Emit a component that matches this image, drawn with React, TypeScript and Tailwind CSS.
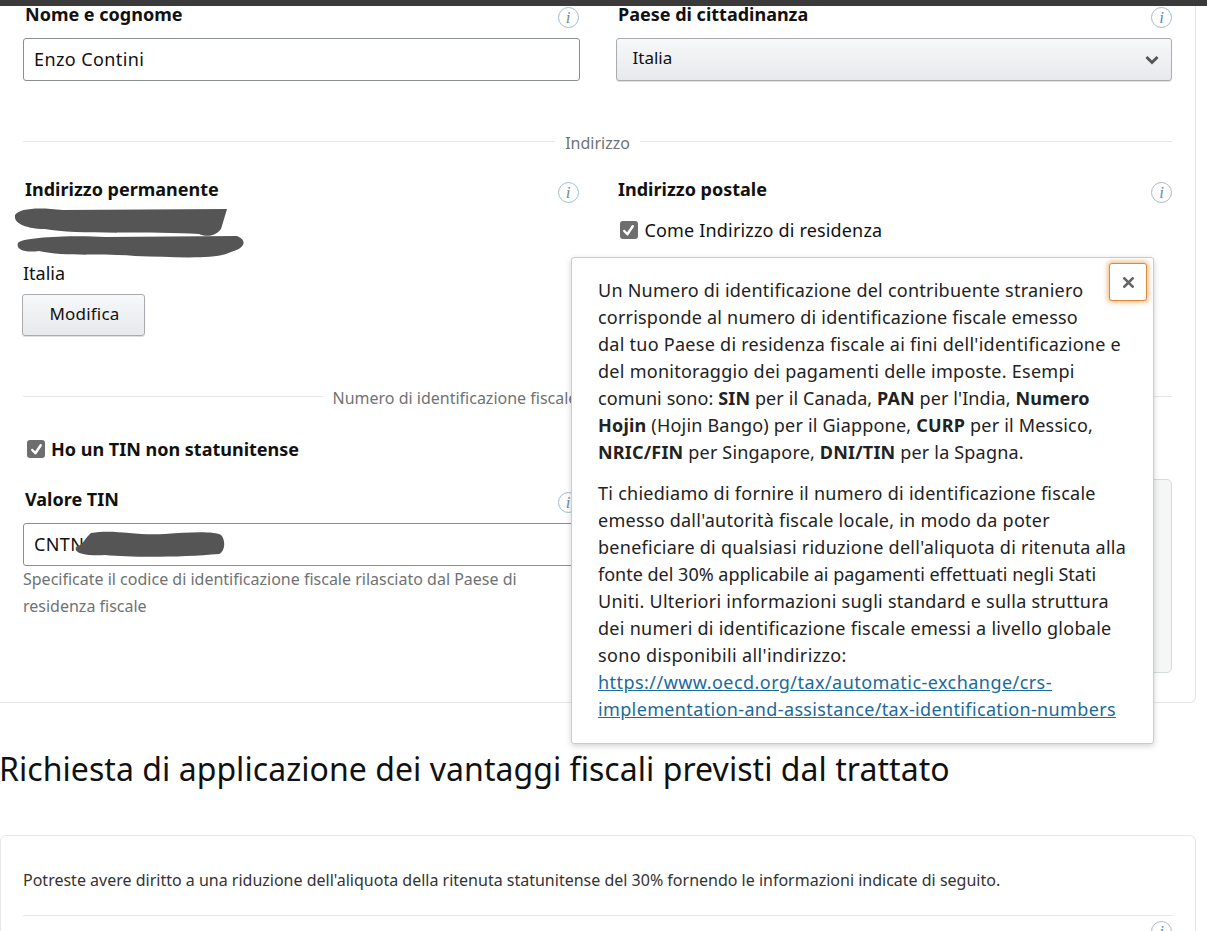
function Info({ className = "" }: { className?: string }) {
  return (
    <span className={"flex h-[21px] w-[21px] shrink-0 translate-y-[3px] items-center justify-center rounded-full border-[1.5px] border-[#a3bcc8] bg-white text-[17px] italic leading-none text-[#6b8f9f] [font-family:'Liberation_Serif',serif] " + className}>
      i
    </span>
  );
}

function Label({ children }: { children: React.ReactNode }) {
  return <div className="text-[18px] font-bold leading-[24px] text-[#111]">{children}</div>;
}

function LabelRow({ children, className = "" }: { children: React.ReactNode; className?: string }) {
  return (
    <div className={"flex items-center justify-between " + className}>
      <Label>{children}</Label>
      <Info />
    </div>
  );
}

function Check({ className = "" }: { className?: string }) {
  return (
    <span className={"flex h-[18px] w-[18px] shrink-0 items-center justify-center rounded-[3px] bg-[#6e6e6e] " + className}>
      <svg viewBox="0 0 16 16" className="h-[15px] w-[15px]" fill="none" stroke="#fff" strokeWidth="2.6" strokeLinecap="round" strokeLinejoin="round">
        <path d="M3.5 8.5 L6.8 12 L12.5 3.5" />
      </svg>
    </span>
  );
}

function Divider({ children, className = "" }: { children: React.ReactNode; className?: string }) {
  return (
    <div className={"flex items-center gap-[10px] " + className}>
      <div className="h-px flex-1 bg-[#e7e7e7]" />
      <div className="text-[16px] leading-[24px] text-[#6f7373] translate-y-[2px]">{children}</div>
      <div className="h-px flex-1 bg-[#e7e7e7]" />
    </div>
  );
}

export default function App() {
  return (
    <div className="relative h-[931px] w-[1207px] overflow-hidden bg-white text-[#111] [font-family:'Noto_Sans',sans-serif]">
      <div className="relative z-10 h-[6px] bg-[#3a3a3a]" />

      {/* first card */}
      <div className="h-[697px] w-[1196px] rounded-br-[6px] border-r border-b border-[#e7e7e7] px-[23px]">
        <div className="grid grid-cols-2 gap-x-[36px]">
          <div>
            <LabelRow className="-mt-[2px] h-[20px] pl-[2px] pr-[1px]">Nome e cognome</LabelRow>
            <div className="mt-[14px] flex h-[43px] items-center rounded-[3px] border border-[#8a8f94] px-[10px] text-[18px] tracking-[0.4px]">Enzo Contini</div>
          </div>
          <div>
            <LabelRow className="-mt-[2px] h-[20px] pl-[2.5px]">Paese di cittadinanza</LabelRow>
            <div className="mt-[14px] flex h-[43px] items-center justify-between rounded-[3px] border border-[#a8acb0] bg-gradient-to-b from-[#f7f8fa] to-[#e7e9ec] pl-[16px] pr-[12px] text-[17px] shadow-[0_1px_0_rgba(0,0,0,0.12)]">
              <span className="-translate-y-[2px]">Italia</span>
              <svg viewBox="0 0 14 10" className="h-[10px] w-[14px]" fill="none" stroke="#555" strokeWidth="3">
                <path d="M1.5 2 L7 7.5 L12.5 2" />
              </svg>
            </div>
          </div>
        </div>

        <Divider className="mt-[48px] h-[24px]">Indirizzo</Divider>

        <div className="mt-[24px] grid grid-cols-2 gap-x-[36px]">
          <div>
            <LabelRow className="pl-[2px] pr-[1px]">Indirizzo permanente</LabelRow>
            <div className="mt-[60px] text-[18px] leading-[24px]">Italia</div>
            <div className="mt-[9px] -ml-px flex h-[42px] w-[123px] items-center justify-center rounded-[3px] border border-[#a8acb0] bg-gradient-to-b from-[#f7f8fa] to-[#e7e9ec] pb-[2px] pl-[2px] text-[17px] tracking-[0.2px] shadow-[0_1px_0_rgba(0,0,0,0.12)]">
              Modifica
            </div>
          </div>
          <div>
            <LabelRow className="pl-[2.5px]">Indirizzo postale</LabelRow>
            <div className="mt-[17px] flex items-center gap-[7px] pl-[4px] text-[18px] leading-[24px] tracking-[0.17px]">
              <Check />
              Come Indirizzo di residenza
            </div>
          </div>
        </div>

        <Divider className="mt-[48px] h-[24px]">
          <span className="inline-block w-[530px] whitespace-nowrap">Numero di identificazione fiscale</span>
        </Divider>

        <div className="mt-[29px] grid grid-cols-2 gap-x-[36px]">
          <div>
            <div className="flex h-[24px] items-center gap-[6px] pl-[4px] text-[18px] font-bold">
              <Check />
              Ho un TIN non statunitense
            </div>
            <LabelRow className="mt-[26px] pl-[2px] pr-[1px]">Valore TIN</LabelRow>
            <div className="mt-[12px] flex h-[43px] items-center rounded-[3px] border border-[#8a8f94] px-[10px] text-[18px] tracking-[0.4px]">CNTN</div>
            <div className="text-[16px] leading-[27px] text-[#6f7373]">
              Specificate il codice di identificazione fiscale rilasciato dal Paese di residenza fiscale
            </div>
          </div>
          <div className="mt-[42px] h-[194px] rounded-[5px] border border-[#d5dbdb] bg-[#f5f6f6]" />
        </div>
      </div>

      <h1 className="-ml-px mt-[42px] text-[32px] font-normal leading-[48px] tracking-[0.05px] text-[#111]">
        Richiesta di applicazione dei vantaggi fiscali previsti dal trattato
      </h1>

      {/* second card */}
      <div className="mt-[42px] h-[120px] w-[1196px] rounded-t-[6px] border-x border-t border-[#e7e7e7] px-[22px]">
        <div className="mt-[32px] text-[16px] leading-[24px] text-[#333]">
          Potreste avere diritto a una riduzione dell'aliquota della ritenuta statunitense del 30% fornendo le informazioni indicate di seguito.
        </div>
        <div className="mt-[23px] h-px bg-[#e7e7e7]" />
        <div className="mt-[2px] flex justify-end pr-[1px]"><Info /></div>
      </div>

      {/* redaction strokes */}
      <svg viewBox="0 0 232 52" className="absolute left-[15px] top-[207px] h-[52px] w-[232px]" fill="#555">
        <path d="M0 8 C4 1 24 0 48 3 L212 2 L206 22 C200 30 190 30 184 27 C140 24 60 28 30 22 C16 22 -2 18 0 8 Z" />
        <path d="M3 36 C6 30 60 28 90 30 L222 29 C232 33 231 41 216 45 C200 53 160 50 120 49 C90 46 50 50 24 44 C8 46 1 42 3 36 Z" />
      </svg>
      <svg viewBox="0 0 150 28" className="absolute left-[75px] top-[530px] h-[28px] w-[150px]" fill="#555">
        <path d="M16 3 C40 -1 60 6 90 4 C115 2 140 1 146 5 C151 10 150 22 144 24 C110 27 60 28 30 25 C14 26 -2 24 1 17 C8 15 10 8 16 3 Z" />
      </svg>

      {/* popover */}
      <div className="absolute left-[571px] top-[257px] h-[487px] w-[583px] whitespace-nowrap rounded-[3px] border border-[#c9cccc] bg-white pl-[26px] pt-[19px] text-[18px] leading-[27px] text-[#222] shadow-[0_2px_6px_rgba(0,0,0,0.18)]">
        <div className="absolute left-[537px] top-[5px] flex h-[38px] w-[38px] items-center justify-center rounded-[3px] border border-[#d98a3a] bg-white shadow-[0_0_4px_2px_rgba(228,121,17,0.45)]">
          <svg viewBox="0 0 12 12" className="h-[11px] w-[11px]" stroke="#666" strokeWidth="3" strokeLinecap="round">
            <path d="M1.5 1.5 L10.5 10.5 M10.5 1.5 L1.5 10.5" />
          </svg>
        </div>
        <div>
          <div className="tracking-[0.24px]">Un Numero di identificazione del contribuente straniero</div>
          <div className="tracking-[0.2px]">corrisponde al numero di identificazione fiscale emesso</div>
          <div className="tracking-[0.27px]">dal tuo Paese di residenza fiscale ai fini dell'identificazione e</div>
          <div className="tracking-[0.27px]">del monitoraggio dei pagamenti delle imposte. Esempi</div>
          <div className="tracking-[0.1px]">comuni sono: <b>SIN</b> per il Canada, <b>PAN</b> per l'India, <b>Numero</b></div>
          <div className="tracking-[0.2px]"><b>Hojin</b> (Hojin Bango) per il Giappone, <b>CURP</b> per il Messico,</div>
          <div className="tracking-[0.18px]"><b>NRIC/FIN</b> per Singapore, <b>DNI/TIN</b> per la Spagna.</div>
        </div>
        <div className="mt-[14px]">
          <div className="tracking-[0.27px]">Ti chiediamo di fornire il numero di identificazione fiscale</div>
          <div className="tracking-[0.25px]">emesso dall'autorità fiscale locale, in modo da poter</div>
          <div className="tracking-[0.26px]">beneficiare di qualsiasi riduzione dell'aliquota di ritenuta alla</div>
          <div>fonte del 30% applicabile ai pagamenti effettuati negli Stati</div>
          <div className="tracking-[0.27px]">Uniti. Ulteriori informazioni sugli standard e sulla struttura</div>
          <div className="tracking-[0.27px]">dei numeri di identificazione fiscale emessi a livello globale</div>
          <div className="tracking-[0.36px]">sono disponibili all'indirizzo:</div>
          <a className="block text-[#1a6a9a] underline">
            <span className="block tracking-[0.45px]">https://www.oecd.org/tax/automatic-exchange/crs-</span>
            <span className="block tracking-[0.36px]">implementation-and-assistance/tax-identification-numbers</span>
          </a>
        </div>
      </div>
    </div>
  );
}
